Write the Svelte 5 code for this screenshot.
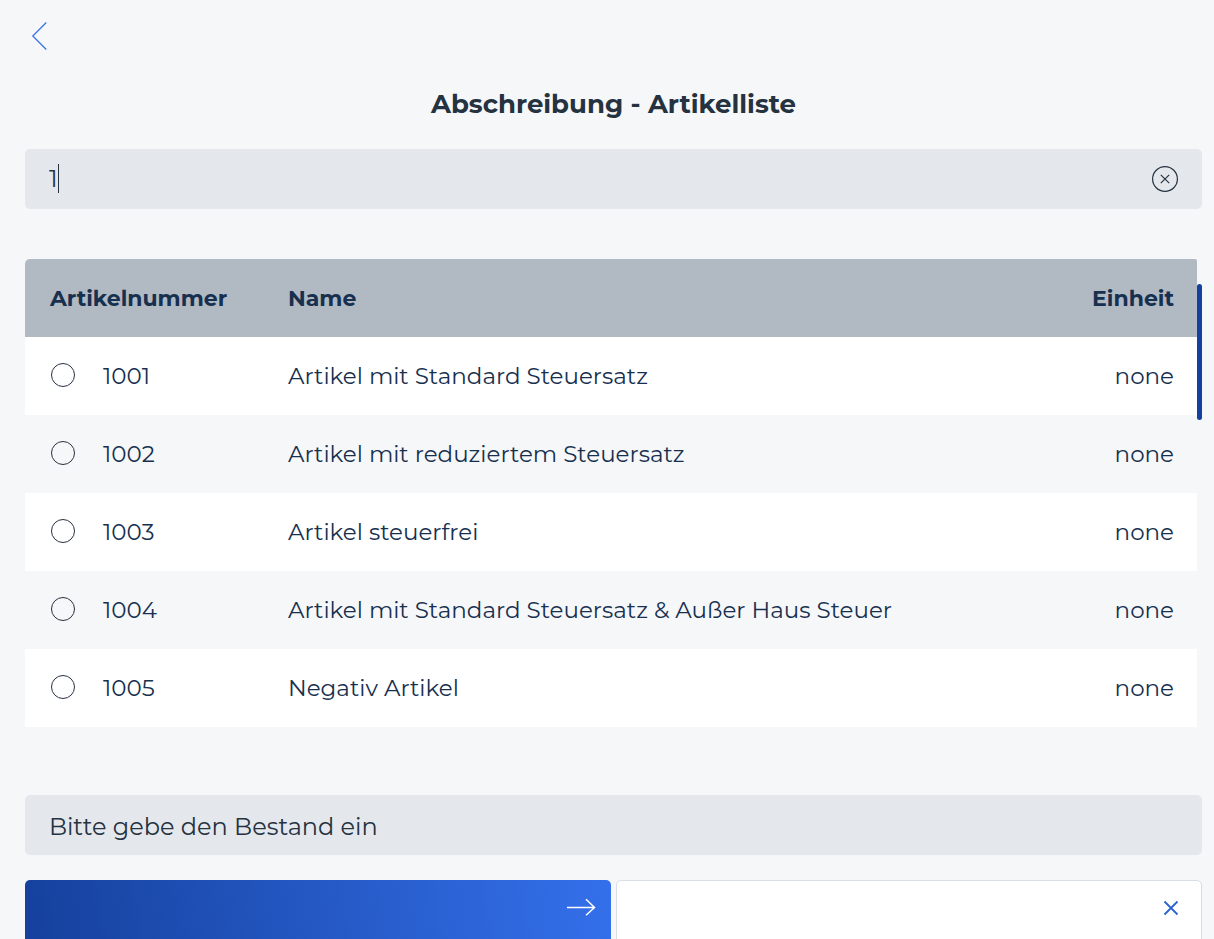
<script>
  import { onMount } from 'svelte';

  const articles = [
    { number: '1001', name: 'Artikel mit Standard Steuersatz', unit: 'none' },
    { number: '1002', name: 'Artikel mit reduziertem Steuersatz', unit: 'none' },
    { number: '1003', name: 'Artikel steuerfrei', unit: 'none' },
    { number: '1004', name: 'Artikel mit Standard Steuersatz & Außer Haus Steuer', unit: 'none' },
    { number: '1005', name: 'Negativ Artikel', unit: 'none' },
  ];

  let search = $state('1');
  let selected = $state('');
  let stock = $state('');
  let searchInput;

  let filtered = $derived(
    articles.filter((a) => (a.number + ' ' + a.name).toLowerCase().includes(search.toLowerCase()))
  );

  onMount(() => searchInput.focus());

  function clearSearch() {
    search = '';
    searchInput.focus();
  }
</script>

<div class="page">
  <header class="topbar">
    <button class="back" type="button" aria-label="Zurück">
      <svg width="16" height="30" viewBox="0 0 16 30">
        <path d="M15.3 1.5 1.8 15 15.3 28.5" />
      </svg>
    </button>
  </header>

  <h1>Abschreibung - Artikelliste</h1>

  <div class="field">
    <div class="entry">
      <input type="text" aria-label="Artikel suchen" bind:value={search} bind:this={searchInput} />
      <span class="mirror" aria-hidden="true"><span class="typed">{search}</span><i class="caret"></i></span>
    </div>
    <button class="clear" type="button" aria-label="Suche leeren" onclick={clearSearch}>
      <svg width="28" height="28" viewBox="0 0 28 28">
        <circle cx="14" cy="14" r="12.4" />
        <path d="M9.8 9.8 18.2 18.2M18.2 9.8 9.8 18.2" />
      </svg>
    </button>
  </div>

  <div class="list">
    <table>
      <thead>
        <tr>
          <th class="number">Artikelnummer</th>
          <th>Name</th>
          <th class="unit">Einheit</th>
        </tr>
      </thead>
      <tbody>
        {#each filtered as article (article.number)}
          <tr>
            <td class="number">
              <label>
                <input type="radio" name="article" value={article.number} bind:group={selected} />
                {article.number}
              </label>
            </td>
            <td>{article.name}</td>
            <td class="unit">{article.unit}</td>
          </tr>
        {/each}
      </tbody>
    </table>
    <div class="track">
      <div class="thumb"></div>
    </div>
  </div>

  <div class="field stock">
    <input type="text" aria-label="Bestand" placeholder="Bitte gebe den Bestand ein" bind:value={stock} />
  </div>

  <div class="actions">
    <button class="action primary" type="button" aria-label="Weiter">
      <svg width="30" height="18" viewBox="0 0 30 18">
        <path d="M1 9.5H28.5M20 1.2 28.5 9.5 20 17.2" />
      </svg>
    </button>
    <button class="action secondary" type="button" aria-label="Abbrechen">
      <svg width="16" height="16" viewBox="0 0 16 16">
        <path d="M1.5 1.5 14.5 14.5M14.5 1.5 1.5 14.5" />
      </svg>
    </button>
  </div>
</div>

<style>
  :global(body) {
    margin: 0;
    background: #f6f7f9;
  }

  .page {
    box-sizing: border-box;
    height: 100vh;
    overflow: hidden;
    padding: 0 12px 0 25px;
    color: #25323f;
    font-family: Montserrat, Inter, sans-serif;
    font-size: 24px;
  }

  button {
    margin: 0;
    padding: 0;
    border: 0;
    background: none;
    cursor: pointer;
  }

  svg {
    display: block;
    fill: none;
  }

  .topbar {
    display: flex;
    align-items: center;
    height: 72px;
    padding-left: 6px;
  }

  .back svg {
    stroke: #3b74e4;
    stroke-width: 1.3;
  }

  h1 {
    margin: 16px 0 29px;
    font-size: 26px;
    line-height: 32px;
    font-weight: 700;
    text-align: center;
  }

  .field {
    display: flex;
    align-items: center;
    height: 60px;
    padding: 0 23px 0 24px;
    border-radius: 5px;
    background: #e4e8ec;
  }

  .field input {
    flex: 1;
    box-sizing: border-box;
    width: 100%;
    min-width: 0;
    height: 60px;
    padding: 0;
    border: 0;
    outline: 0;
    background: none;
    color: inherit;
    font: inherit;
  }

  .stock input {
    padding-top: 2px;
  }

  .field input::placeholder {
    color: inherit;
    opacity: 1;
  }

  .entry {
    position: relative;
    display: flex;
    flex: 1;
  }

  .entry input {
    padding-bottom: 2px;
    caret-color: transparent;
  }

  /* own caret, placed after an invisible copy of the typed text */
  .mirror {
    position: absolute;
    inset: 0;
    display: flex;
    align-items: center;
    padding-bottom: 2px;
    pointer-events: none;
    white-space: pre;
  }

  .typed {
    visibility: hidden;
  }

  .caret {
    width: 1px;
    height: 29px;
    background: #25323f;
  }

  .clear svg {
    stroke: #25323f;
    stroke-width: 1.2;
  }

  .list {
    display: flex;
    margin: 50px 0 68px;
  }

  table {
    flex: 1;
    border-collapse: collapse;
    color: #17304f;
    font-size: 23px;
  }

  th,
  td {
    height: 78px;
    padding: 0;
    text-align: left;
  }

  th {
    background: #b1b9c3;
    font-size: 22px;
    font-weight: 700;
  }

  th:first-child {
    border-top-left-radius: 5px;
  }

  th:last-child {
    border-top-right-radius: 2px;
  }

  tbody tr:nth-child(odd) {
    background: #fff;
  }

  .number {
    width: 238px;
    padding-left: 25px;
  }

  .unit {
    padding-right: 23px;
    text-align: right;
  }

  label {
    display: flex;
    align-items: center;
    gap: 28px;
  }

  input[type='radio'] {
    appearance: none;
    box-sizing: border-box;
    width: 24px;
    height: 24px;
    margin: 0 0 2px 1px;
    border: 1px solid #25323f;
    border-radius: 50%;
  }

  input[type='radio']:checked {
    background: #2b62dc;
    box-shadow: inset 0 0 0 4px #fff;
  }

  .track {
    width: 5px;
    padding-top: 25px;
  }

  .thumb {
    height: 136px;
    border-radius: 3px;
    background: #15409f;
  }

  .actions {
    display: grid;
    grid-template-columns: 1fr 1fr;
    gap: 5px;
    margin-top: 25px;
  }

  .action {
    display: flex;
    box-sizing: border-box;
    justify-content: flex-end;
    align-items: flex-start;
    height: 78px;
    border-radius: 5px;
  }

  .primary {
    padding: 18px 15px;
    background: linear-gradient(80deg, #15409c, #3470eb);
  }

  .primary svg {
    stroke: #fff;
    stroke-width: 1.5;
  }

  .secondary {
    padding: 19px 22px;
    border: 1px solid #d9dde6;
    background: #fff;
  }

  .secondary svg {
    stroke: #2b62d4;
    stroke-width: 1.8;
  }
</style>
